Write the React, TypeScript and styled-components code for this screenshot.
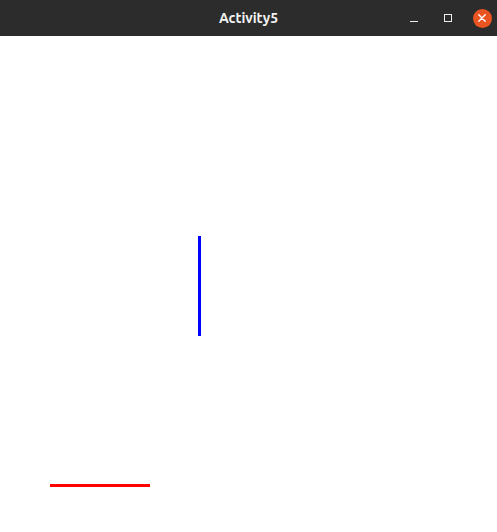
import React from "react";
import styled, { createGlobalStyle } from "styled-components";

const Global = createGlobalStyle`
  html, body { margin: 0; padding: 0; background: #ffffff; }
  #root { width: 497px; height: 532px; }
`;

const Window = styled.div`
  width: 497px;
  height: 532px;
  display: flex;
  flex-direction: column;
  background: #ffffff;
  overflow: hidden;
`;

const TitleBar = styled.header`
  height: 36px;
  flex: none;
  background: #2c2c2c;
  display: grid;
  grid-template-columns: 1fr auto 1fr;
  align-items: center;
`;

const Title = styled.div`
  grid-column: 2;
  color: #f2f2f2;
  font-family: "Ubuntu", "Open Sans", "DejaVu Sans", sans-serif;
  font-weight: 700;
  font-size: 14px;
  letter-spacing: 0;
  line-height: 36px;
`;

const Controls = styled.div`
  grid-column: 3;
  justify-self: end;
  display: flex;
  align-items: center;
  gap: 10px;
  padding-right: 3px;
  height: 36px;
`;

const ControlButton = styled.div`
  width: 24px;
  height: 24px;
  display: flex;
  align-items: center;
  justify-content: center;
`;

const MinimizeGlyph = styled.span`
  width: 8px;
  height: 1px;
  margin-top: 7px;
  background: #eeeeee;
`;

const MaximizeGlyph = styled.span`
  width: 6px;
  height: 6px;
  border: 1px solid #eeeeee;
`;

const CloseCircle = styled.div`
  width: 19px;
  height: 19px;
  border-radius: 50%;
  background: #e95420;
  display: flex;
  align-items: center;
  justify-content: center;
`;

const Canvas = styled.svg`
  display: block;
  flex: 1;
  width: 497px;
  height: 496px;
`;

export default function App() {
  return (
    <>
      <Global />
      <Window>
        <TitleBar>
          <Title>Activity5</Title>
          <Controls>
            <ControlButton>
              <MinimizeGlyph />
            </ControlButton>
            <ControlButton>
              <MaximizeGlyph />
            </ControlButton>
            <ControlButton>
              <CloseCircle>
                <svg width="8" height="8" viewBox="0 0 8 8">
                  <path d="M0.8 0.8 L7.2 7.2 M7.2 0.8 L0.8 7.2" stroke="#ffffff" strokeWidth="1.4" strokeLinecap="round" />
                </svg>
              </CloseCircle>
            </ControlButton>
          </Controls>
        </TitleBar>
        <Canvas viewBox="0 0 497 496" shapeRendering="crispEdges">
          <rect x="198" y="200" width="3" height="100" fill="#0000ff" />
          <rect x="50" y="448" width="100" height="3" fill="#ff0000" />
        </Canvas>
      </Window>
    </>
  );
}
